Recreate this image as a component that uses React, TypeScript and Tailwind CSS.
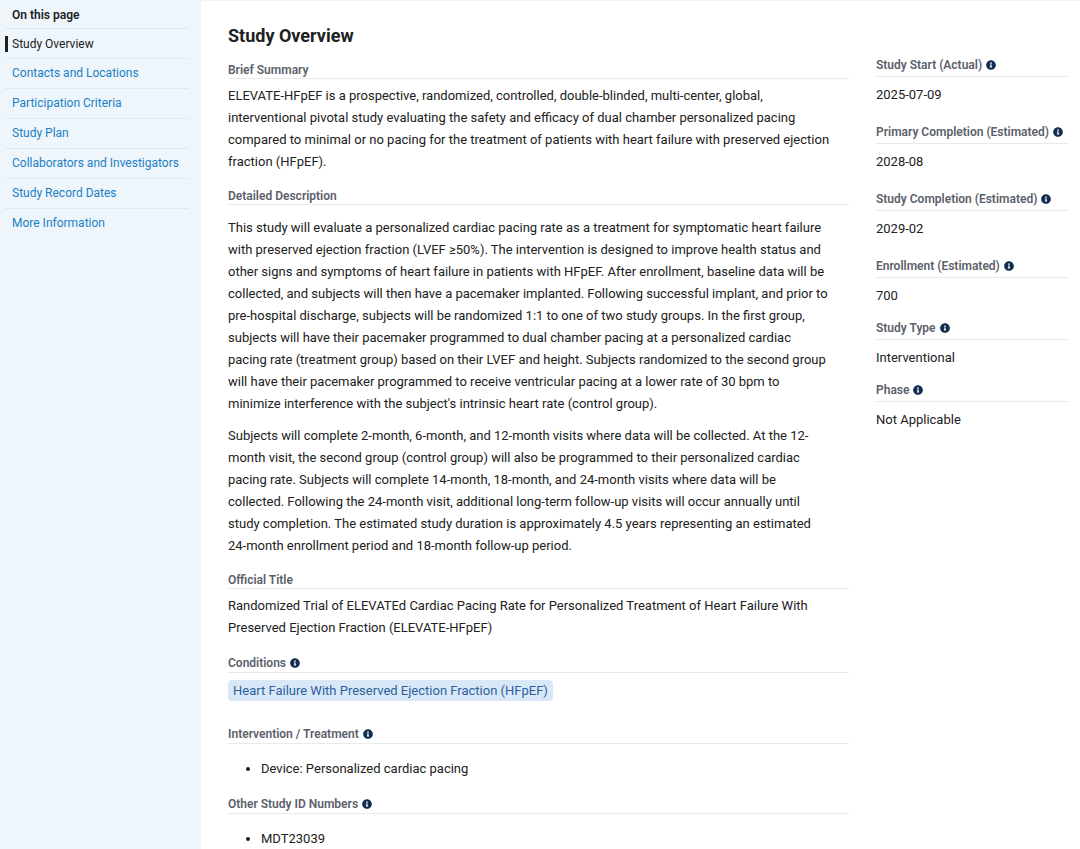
import React from 'react';
import { FaInfoCircle } from 'react-icons/fa';

const navLinks = [
  'Contacts and Locations',
  'Participation Criteria',
  'Study Plan',
  'Collaborators and Investigators',
  'Study Record Dates',
  'More Information',
];

const dates = [
  { label: 'Study Start (Actual)', value: '2025-07-09' },
  { label: 'Primary Completion (Estimated)', value: '2028-08' },
  { label: 'Study Completion (Estimated)', value: '2029-02' },
  { label: 'Enrollment (Estimated)', value: '700' },
];

const design = [
  { label: 'Study Type', value: 'Interventional' },
  { label: 'Phase', value: 'Not Applicable' },
];

const InfoButton: React.FC<{ label: string }> = ({ label }) => (
  <button type="button" aria-label={`More about ${label}`} className="text-[#112e51]">
    <FaInfoCircle size={10} />
  </button>
);

const SectionLabel: React.FC<{ children: string }> = ({ children }) => (
  <h3 className="border-b border-[#e9eaec] text-xs leading-4 font-semibold text-[#5b616b]">{children}</h3>
);

const InfoLabel: React.FC<{ children: string }> = ({ children }) => (
  <h3 className="flex items-center gap-1 border-b border-[#e9eaec] text-xs leading-[18px] font-semibold text-[#5b616b]">
    {children}
    <InfoButton label={children} />
  </h3>
);

const Fact: React.FC<{ label: string; value: string }> = ({ label, value }) => (
  <div>
    <dt className="flex items-center gap-1 border-b border-[#e9eaec] text-xs leading-[22px] font-semibold text-[#5b616b]">
      {label}
      <InfoButton label={label} />
    </dt>
    <dd className="mt-[7px]">{value}</dd>
  </div>
);

const Sidebar: React.FC = () => (
  <nav className="w-[201px] shrink-0 pr-3 pl-[5px] text-xs leading-[29px]">
    <h2 className="border-b border-[#e3e6ea] pt-0.5 pl-[7px] leading-[26px] font-semibold">On this page</h2>
    <ul className="divide-y divide-[#e3e6ea]">
      <li className="flex h-[30px] items-center">
        <a href="#overview" aria-current="true" className="border-l-3 border-[#212121] pl-1 leading-4">
          Study Overview
        </a>
      </li>
      {navLinks.map((link) => (
        <li key={link} className="pl-[7px]">
          <a href="#section" className="text-[#1b7fc4]">{link}</a>
        </li>
      ))}
    </ul>
  </nav>
);

const App: React.FC = () => {
  return (
    <div className="flex min-h-screen bg-[#eef6fc] font-['Roboto',sans-serif] text-[13px] leading-[22px] text-[#212121]">
      <Sidebar />

      <div className="mt-px flex flex-1 gap-[27px] rounded-tl bg-white pr-3 pb-4 pl-[27px]">
        <main className="min-w-0 flex-1 pt-[21px]">
          <h1 id="overview" className="text-lg leading-7 font-bold">Study Overview</h1>

          <section className="mt-3">
            <SectionLabel>Brief Summary</SectionLabel>
            <p className="mt-1.5">
              ELEVATE-HFpEF is a prospective, randomized, controlled, double-blinded, multi-center, global,<br />
              interventional pivotal study evaluating the safety and efficacy of dual chamber personalized pacing<br />
              compared to minimal or no pacing for the treatment of patients with heart failure with preserved ejection<br />
              fraction (HFpEF).
            </p>
          </section>

          <section className="mt-[15px]">
            <SectionLabel>Detailed Description</SectionLabel>
            <p className="mt-3">
              This study will evaluate a personalized cardiac pacing rate as a treatment for symptomatic heart failure<br />
              with preserved ejection fraction (LVEF ≥50%). The intervention is designed to improve health status and<br />
              other signs and symptoms of heart failure in patients with HFpEF. After enrollment, baseline data will be<br />
              collected, and subjects will then have a pacemaker implanted. Following successful implant, and prior to<br />
              pre-hospital discharge, subjects will be randomized 1:1 to one of two study groups. In the first group,<br />
              subjects will have their pacemaker programmed to dual chamber pacing at a personalized cardiac<br />
              pacing rate (treatment group) based on their LVEF and height. Subjects randomized to the second group<br />
              will have their pacemaker programmed to receive ventricular pacing at a lower rate of 30 bpm to<br />
              minimize interference with the subject's intrinsic heart rate (control group).
            </p>
            <p className="mt-2.5">
              Subjects will complete 2-month, 6-month, and 12-month visits where data will be collected. At the 12-<br />
              month visit, the second group (control group) will also be programmed to their personalized cardiac<br />
              pacing rate. Subjects will complete 14-month, 18-month, and 24-month visits where data will be<br />
              collected. Following the 24-month visit, additional long-term follow-up visits will occur annually until<br />
              study completion. The estimated study duration is approximately 4.5 years representing an estimated<br />
              24-month enrollment period and 18-month follow-up period.
            </p>
          </section>

          <section className="mt-[15px]">
            <SectionLabel>Official Title</SectionLabel>
            <p className="mt-1.5">
              Randomized Trial of ELEVATEd Cardiac Pacing Rate for Personalized Treatment of Heart Failure With<br />
              Preserved Ejection Fraction (ELEVATE-HFpEF)
            </p>
          </section>

          <section className="mt-[15px]">
            <InfoLabel>Conditions</InfoLabel>
            <span className="mt-[7px] inline-block rounded-sm bg-[#d9e8f6] px-[5px] leading-[21px] text-[#2e5f9e]">
              Heart Failure With Preserved Ejection Fraction (HFpEF)
            </span>
          </section>

          <section className="mt-[23px]">
            <InfoLabel>Intervention / Treatment</InfoLabel>
            <ul className="mt-3.5 list-disc pl-[33px]">
              <li>Device: Personalized cardiac pacing</li>
            </ul>
          </section>

          <section className="mt-[15px]">
            <InfoLabel>Other Study ID Numbers</InfoLabel>
            <ul className="mt-3.5 list-disc pl-[33px]">
              <li>MDT23039</li>
            </ul>
          </section>
        </main>

        <aside className="w-48 shrink-0 pt-[53px]">
          <dl className="flex flex-col gap-[15px]">
            {dates.map((item) => (
              <Fact key={item.label} {...item} />
            ))}
          </dl>
          <dl className="mt-2.5 flex flex-col gap-2.5">
            {design.map((item) => (
              <Fact key={item.label} {...item} />
            ))}
          </dl>
        </aside>
      </div>
    </div>
  );
};

export default App;
